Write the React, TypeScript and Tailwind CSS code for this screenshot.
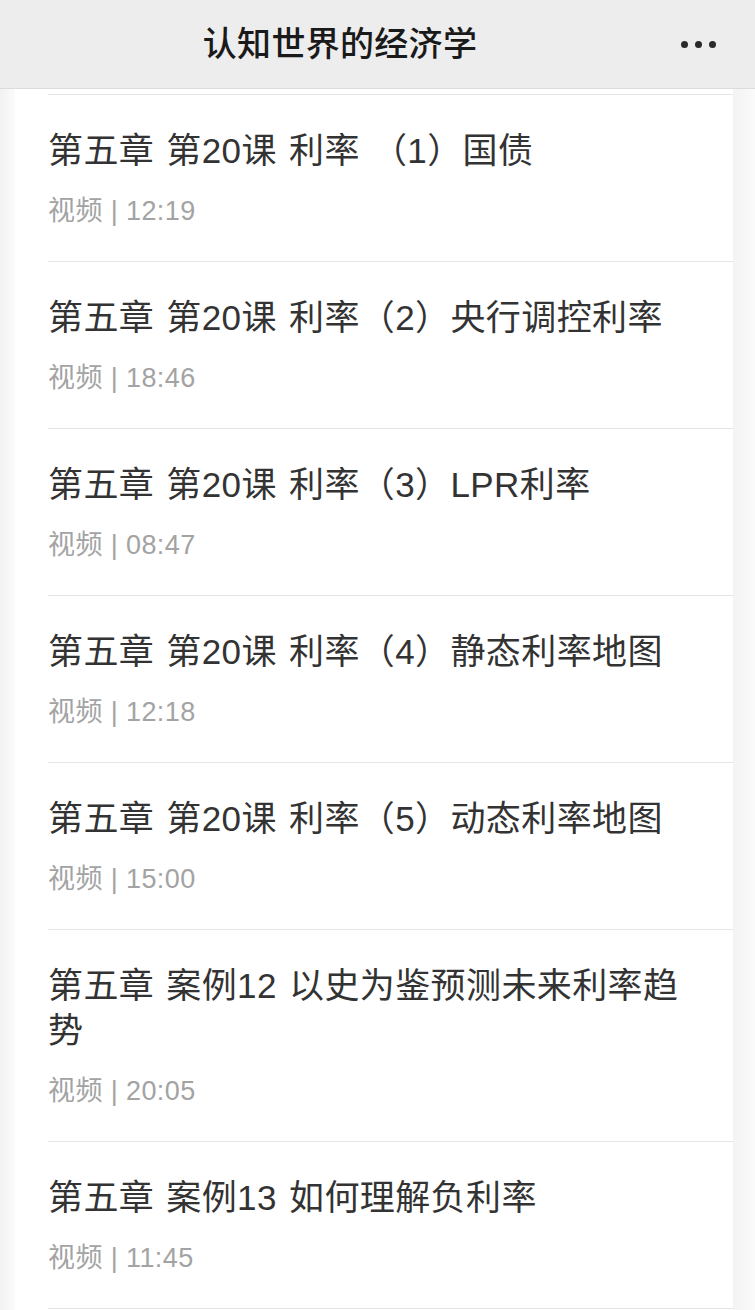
import React from "react";

const items: { title: string; meta: string }[] = [
  { title: "第五章 第20课 利率 （1）国债", meta: "视频 | 12:19" },
  { title: "第五章 第20课 利率（2）央行调控利率", meta: "视频 | 18:46" },
  { title: "第五章 第20课 利率（3）LPR利率", meta: "视频 | 08:47" },
  { title: "第五章 第20课 利率（4）静态利率地图", meta: "视频 | 12:18" },
  { title: "第五章 第20课 利率（5）动态利率地图", meta: "视频 | 15:00" },
  { title: "第五章 案例12 以史为鉴预测未来利率趋势", meta: "视频 | 20:05" },
  { title: "第五章 案例13 如何理解负利率", meta: "视频 | 11:45" },
];

export default function App() {
  const font = {
    fontFamily:
      '"Liberation Sans", "Noto Sans CJK SC", "Noto Sans", sans-serif',
  };
  return (
    <div className="w-[755px] h-[1310px] overflow-hidden bg-[#f7f7f7]" style={font}>
      <header className="h-[89px] bg-[#ededed] border-b border-[#dcdcdc] flex items-center relative">
        <div className="w-[680px] flex justify-center">
          <span className="text-[34px] font-medium text-[#1a1a1a] tracking-[0.3px]">认知世界的经济学</span>
        </div>
        <div className="flex gap-[7px] items-center ml-[1px]">
          <span className="w-[7px] h-[7px] rounded-full bg-[#2a2a2a]" />
          <span className="w-[7px] h-[7px] rounded-full bg-[#2a2a2a]" />
          <span className="w-[7px] h-[7px] rounded-full bg-[#2a2a2a]" />
        </div>
      </header>
      <div className="flex h-[1221px]">
        <div className="w-[15px] bg-gradient-to-r from-[#f2f2f2] to-[#fbfbfb]" />
        <main className="w-[718px] bg-white pt-[5px]">
          <div className="ml-[33px] border-t border-[#e5e5e5]">
            {items.map((it, i) => (
              <div key={i} className="border-b border-[#e5e5e5] pt-[33px] pb-[32px] pr-[35px]">
                <div className="text-[35px] leading-[45px] text-[#333333] tracking-[0.4px] [word-spacing:2px]">{it.title}</div>
                <div className="mt-[20px] text-[27px] leading-[36px] text-[#a3a3a3] tracking-[0.4px]">{it.meta}</div>
              </div>
            ))}
          </div>
        </main>
        <div className="w-[22px] bg-gradient-to-r from-[#f3f3f3] to-[#fafafa]" />
      </div>
    </div>
  );
}
